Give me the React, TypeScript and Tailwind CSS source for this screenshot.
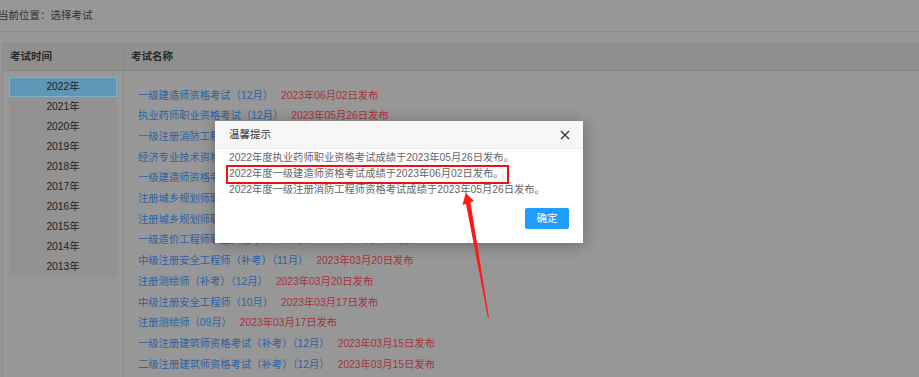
import React from "react";

const years = ["2022年", "2021年", "2020年", "2019年", "2018年", "2017年", "2016年", "2015年", "2014年", "2013年"];

const exams: [string, string][] = [
  ["一级建造师资格考试（12月）", "2023年06月02日发布"],
  ["执业药师职业资格考试（12月）", "2023年05月26日发布"],
  ["一级注册消防工程师资格考试（11月）", "2023年05月26日发布"],
  ["经济专业技术资格考试（11月）", "2023年04月28日发布"],
  ["一级建造师资格考试（补考）", "2023年04月20日发布"],
  ["注册城乡规划师职业资格考试（补考）", "2023年04月10日发布"],
  ["注册城乡规划师职业资格考试（11月）", "2023年04月10日发布"],
  ["一级造价工程师职业资格考试（11月）", "2023年03月21日发布"],
  ["中级注册安全工程师（补考）（11月）", "2023年03月20日发布"],
  ["注册测绘师（补考）（12月）", "2023年03月20日发布"],
  ["中级注册安全工程师（10月）", "2023年03月17日发布"],
  ["注册测绘师（09月）", "2023年03月17日发布"],
  ["一级注册建筑师资格考试（补考）（12月）", "2023年03月15日发布"],
  ["二级注册建筑师资格考试（补考）（12月）", "2023年03月15日发布"],
];

const font = { fontFamily: '"Liberation Sans", "Noto Sans CJK SC", sans-serif' };

export default function App() {
  return (
    <div className="relative w-[919px] h-[377px] overflow-hidden bg-[#979797] text-[10.3px]" style={font}>
      {/* breadcrumb */}
      <div className="h-[32px] flex items-center -ml-[2px] text-[10.5px] text-[#333] border-b border-[#8a8a8a] whitespace-nowrap">
        当前位置：选择考试
      </div>
      {/* table */}
      <div className="mt-[11px] ml-[2px] border-t border-l border-[#8c8c8c] flex flex-col h-[335px]">
        <div className="flex h-[27px] bg-[#8f8f8f] border-b border-[#858585] font-bold text-[#2a2a2a] text-[10.5px]">
          <div className="w-[121px] pl-[7px] flex items-center border-r border-[#888]">考试时间</div>
          <div className="flex-1 pl-[7px] flex items-center">考试名称</div>
        </div>
        <div className="flex flex-1">
          <div className="w-[121px] border-r border-[#8a8a8a] pt-[6px] px-[6px]">
            <div className="bg-[#929292]">
              {years.map((y, i) => (
                <div
                  key={y}
                  className={
                    i === 0
                      ? "h-[20px] flex items-center justify-center bg-[#5e96b6] border border-[#7fb0cc] text-[#1e1e1e]"
                      : "h-[20px] flex items-center justify-center text-[#222]"
                  }
                >
                  {y}
                </div>
              ))}
            </div>
          </div>
          <div className="flex-1 pl-[14px] pt-[14px]">
            {exams.map(([n, d]) => (
              <div key={n} className="h-[20.7px] flex items-center whitespace-nowrap">
                <span className="text-[#2c62a3]">{n}</span>
                <span className="ml-[8px] text-[#a8323a]">{d}</span>
              </div>
            ))}
          </div>
        </div>
      </div>

      {/* dialog */}
      <div className="absolute left-[215px] top-[121px] w-[368px] h-[122px] bg-white shadow-[0_2px_14px_rgba(0,0,0,0.3)]">
        <div className="h-[28px] bg-[#f7f7f7] border-b border-[#ececec] flex items-center justify-between pl-[14px] pr-[12px]">
          <span className="text-[#333] text-[10.5px]">温馨提示</span>
          <svg width="10" height="10" viewBox="0 0 10 10" className="mr-[1px]">
            <path d="M1 1 L9 9 M9 1 L1 9" stroke="#333" strokeWidth="1.4" />
          </svg>
        </div>
        <div className="pl-[14px] pt-[1px] text-[#666] leading-[16px] whitespace-nowrap">
          <div>2022年度执业药师职业资格考试成绩于2023年05月26日发布。</div>
          <div>2022年度一级建造师资格考试成绩于2023年06月02日发布。</div>
          <div>2022年度一级注册消防工程师资格考试成绩于2023年05月26日发布。</div>
        </div>
        <div className="absolute left-[11px] top-[44px] w-[283px] h-[19px] border-2 border-[#ee1111]" />
        <div className="absolute left-[310px] top-[87px] w-[44px] h-[21px] bg-[#1e9fff] rounded-[2px] text-white flex items-center justify-center text-[10.5px]">
          确定
        </div>
      </div>

      {/* red arrow */}
      <svg className="absolute left-0 top-0" width="919" height="377" viewBox="0 0 919 377">
        <polygon
          points="465.7,193 474,201 470.5,202.5 489,318 488,318 466,204 462.5,205"
          fill="#ff1a1a"
        />
      </svg>
    </div>
  );
}
